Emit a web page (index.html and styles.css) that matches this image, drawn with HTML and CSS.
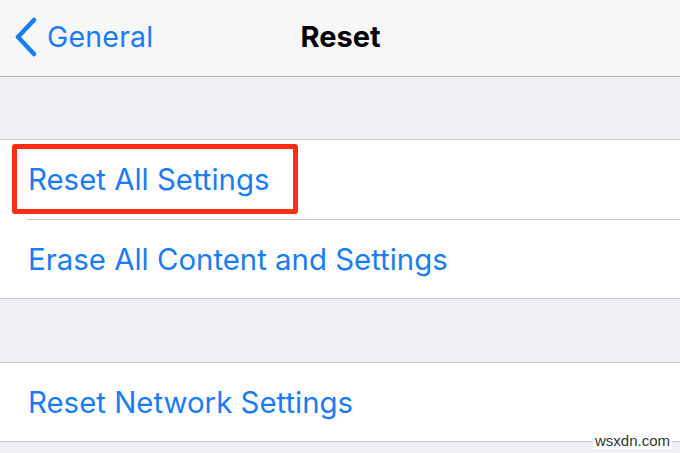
FILE: index.html
```html
<!DOCTYPE html>
<html>
<head>
<meta charset="utf-8">
<link rel="stylesheet" href="styles.css">
</head>
<body>
<div class="screen">
  <header class="nav">
    <div class="back">
      <svg class="chev" width="24" height="40" viewBox="0 0 24 40">
        <path d="M20 3 L4 20 L20 37" fill="none" stroke="#1a7cf2" stroke-width="4.5" stroke-linecap="round" stroke-linejoin="round"/>
      </svg>
      <span class="back-label">General</span>
    </div>
    <div class="title">Reset</div>
  </header>
  <div class="gap gap1"></div>
  <section class="group">
    <div class="row row-first"><span class="label">Reset All Settings</span><div class="highlight"></div></div>
    <div class="sep"></div>
    <div class="row"><span class="label">Erase All Content and Settings</span></div>
  </section>
  <div class="gap gap2"></div>
  <section class="group">
    <div class="row"><span class="label">Reset Network Settings</span></div>
  </section>
  <div class="watermark">wsxdn.com</div>
</div>
</body>
</html>
```
FILE: styles.css
```css
html, body {
  margin: 0;
  padding: 0;
}
body {
  width: 680px;
  height: 453px;
  overflow: hidden;
  background: #efeff4;
  font-family: Inter, "Liberation Sans", sans-serif;
}
.screen {
  position: relative;
  width: 680px;
  height: 453px;
}
.nav {
  height: 76px;
  box-sizing: border-box;
  padding-bottom: 3px;
  background: #f7f7f8;
  border-bottom: 1px solid #b6b6ba;
  display: flex;
  align-items: center;
  position: relative;
}
.nav { height: 77px; }
.back {
  display: flex;
  align-items: center;
  padding-left: 14px;
  gap: 9px;
  color: #1a7cf2;
}
.chev {
  display: block;
}
.back-label {
  font-size: 28.5px;
  letter-spacing: 0.2px;
}
.title {
  position: absolute;
  left: 0;
  right: 0;
  top: 0;
  bottom: 3px;
  display: flex;
  align-items: center;
  justify-content: center;
  font-size: 29px;
  font-weight: 700;
  color: #000;
  padding-left: 1px;
}
.gap1 { height: 62px; }
.gap2 { height: 63px; }
.group {
  background: #fff;
  border-top: 1px solid #c8c7cc;
  border-bottom: 1px solid #c8c7cc;
}
.row {
  height: 78px;
  display: flex;
  align-items: center;
  padding-left: 28px;
  position: relative;
}
.row-first { height: 79px; }
.sep {
  height: 1px;
  background: #c8c7cc;
  margin-left: 27px;
}
.label {
  font-size: 29.4px;
  color: #1a7cf2;
}
.highlight {
  position: absolute;
  left: 12px;
  top: 4px;
  width: 276px;
  height: 60px;
  border: 5px solid #fb2e14;
  border-radius: 3px;
}
.watermark {
  position: absolute;
  right: 8px;
  bottom: 4px;
  background: #fff;
  color: #333;
  font-family: "Liberation Sans", Arial, sans-serif;
  font-size: 15px;
  padding: 0 2px;
}
```
